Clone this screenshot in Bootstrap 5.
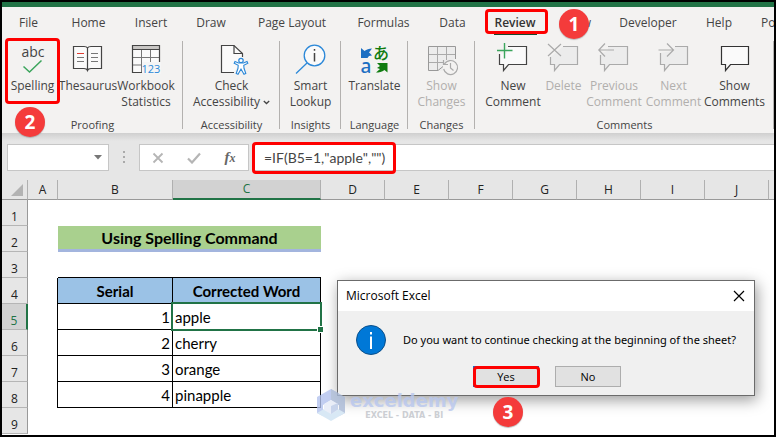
<!DOCTYPE html>
<html lang="en">
<head>
<meta charset="utf-8">
<meta name="viewport" content="width=device-width, initial-scale=1">
<title>Microsoft Excel</title>
<link href="https://cdn.jsdelivr.net/npm/bootstrap@5.3.0/dist/css/bootstrap.min.css" rel="stylesheet">
<style>
  :root { --ui: "Open Sans", "Noto Sans", sans-serif; --cell: Lato, "Open Sans", sans-serif; --excel: #217346; --mark-red: #fe0000; }
  body { font-family: var(--ui); font-size: 12px; line-height: 16px; color: #444; background: #fff; }
  .app-frame { border: 2px solid #000; overflow: hidden; }
  .title-strip { height: 5px; background: var(--excel); }
  .ribbon { background: #f3f2f1; }
  .ribbon-tabs { display: grid; grid-template-columns: 53px 67px 58px 62px 100px 83px 55px 70px 56px 84px 58px minmax(0, 1fr); height: 32px; }
  .ribbon-tabs .nav-link { color: #444; padding: 8px 0; text-align: center; white-space: nowrap; font-size: 12px; }
  .ribbon-tabs .nav-link.tab-cut { padding-left: 13px; text-align: left; }
  .ribbon-tabs .nav-link.active { font-weight: 600; color: #333; }
  .ribbon-tabs .nav-link.active::after { content: ""; position: absolute; left: 14px; right: 13px; top: 26px; height: 2px; background: #17492d; }
  .callout-box::before { content: ""; position: absolute; inset: 0; border: 3px solid var(--mark-red); border-radius: 4px; z-index: 3; pointer-events: none; }
  .tab-callout::before { inset: 2px 2px 5px 5px; }
  .step-dot { position: absolute; z-index: 5; width: 30px; height: 30px; border-radius: 50%; background: #f43b3b; color: #fff; font: 700 19px/30px "Open Sans", sans-serif; text-align: center; box-shadow: 0 1px 1px #8888; }
  .step-one { left: 9px; top: 2px; }
  .step-two { left: 13px; top: 68px; }
  .ribbon-groups { height: 94px; }
  .tool-group { position: relative; padding-top: 4px; }
  .tool-group::after { content: ""; position: absolute; right: 0; top: 2px; bottom: 4px; width: 1px; background: #b3b1af; }
  .tool-row { display: grid; justify-content: center; height: 74px; align-items: start; }
  .g-proof { width: 181px; } .g-proof .tool-row { grid-template-columns: 55px 56px 60px; justify-content: start; padding-left: 3px; }
  .g-access { width: 97px; } .g-access .tool-row { grid-template-columns: 90px; }
  .g-insight { width: 61px; } .g-insight .tool-row { grid-template-columns: 56px; }
  .g-lang, .g-change { width: 67px; } .g-lang .tool-row, .g-change .tool-row { grid-template-columns: 60px; }
  .g-comment { flex: 1 1 0; } .g-comment .tool-row { grid-template-columns: 60px 41px 60px 59px 63px; }
  .tool-btn { position: relative; border: 0; padding: 0; background: none; color: #444; font-size: 12px; line-height: 16px; display: flex; flex-direction: column; align-items: center; white-space: nowrap; }
  .tool-btn svg { width: 32px; height: 32px; margin-bottom: 3px; display: block; overflow: visible; }
  .tool-btn:disabled { color: #b1afad; }
  .spell-callout::before { inset: -5px 0 -10px 0; }
  .group-name { text-align: center; font-size: 11px; line-height: 16px; }
  .formula-zone { background: linear-gradient(#cfcfcf, #e6e6e6 8px); padding: 11px 0 9px 5px; }
  .bar-field { height: 27px; background: #fff; border: 1px solid #c6c6c6; border-radius: 0; padding: 0; }
  .name-box { width: 102px; appearance: none; background: #fff url("data:image/svg+xml,%3Csvg xmlns='http://www.w3.org/2000/svg' width='8' height='5'%3E%3Cpath d='M0 0h8L4 4.500z' fill='%23777'/%3E%3C/svg%3E") no-repeat right 6px center; }
  .bar-dots { width: 30px; }
  .fx-box { width: 110px; }
  .fx-box button { border: 0; background: none; padding: 0; width: 36px; height: 25px; display: grid; place-items: center; }
  .fx-sign { font: italic 700 15px/20px "Liberation Serif", serif; color: #666; }
  .fx-sign small { font-size: 12px; }
  .formula-wrap { position: relative; flex: 1 1 0; margin-left: 3px; }
  .formula-input { width: 100%; padding-left: 11px; font: 14px/20px var(--cell); font-kerning: none; color: #444; border-right: 0; display: block; }
  .formula-callout::before { right: auto; width: 144px; inset: -2px auto -3px 0; }
  .sheet-area { position: relative; }
  .sheet { table-layout: fixed; width: 100%; border-collapse: separate; border-spacing: 0; font: 14px/20px var(--cell); color: #000; }
  .sheet th, .sheet td { padding: 0; height: 26px; white-space: nowrap; overflow: hidden; }
  .sheet thead th { height: 20px; background: #e6e6e6; border-bottom: 1px solid #999; border-right: 1px solid #b0b0b0; text-align: center; font: 12px/18px var(--ui); color: #222; }
  .sheet thead th.corner { text-align: right; }
  .sheet thead th:last-child { border-right: 0; }
  .sheet thead th.picked { background: #d2d2d2; color: var(--excel); border-bottom: 2px solid var(--excel); }
  .sheet tbody th { background: #e6e6e6; border-bottom: 1px solid #b5b5b5; border-right: 1px solid #999; font: 12px/16px var(--ui); color: #222; text-align: center; vertical-align: bottom; }
  .sheet tbody th.picked { background: #d2d2d2; color: var(--excel); border-right: 2px solid var(--excel); }
  .sheet .sheet-title { background: #a9d08e; border-bottom: 3px solid #a3b5de; text-align: center; font-weight: 700; font-size: 16px; }
  .sheet .edge-b { border-bottom: 1px solid #000; }
  .sheet .edge-r { border-right: 1px solid #000; }
  .sheet .boxed { border-right: 1px solid #000; border-bottom: 1px solid #000; font-size: 15px; }
  .sheet .col-name { background: #9bc2e6; text-align: center; font-weight: 700; }
  .sheet .num { text-align: right; padding-right: 2px; }
  .sheet .word { padding-left: 2px; }
  .sheet td.selected { position: relative; overflow: visible; }
  .selected::before { content: ""; position: absolute; inset: -2px -2px -2px -2px; border: 2px solid var(--excel); }
  .selected::after { content: ""; position: absolute; right: -4px; bottom: -4px; width: 7px; height: 7px; background: var(--excel); border: 1px solid #fff; }
  .msg-box { position: absolute; left: 335px; top: 100px; width: 418px; border: 1px solid #6b6b6b; background: #f0f0f0; box-shadow: 2px 4px 14px #0006; color: #000; z-index: 2; }
  .msg-title { height: 30px; padding: 0 9px 0 8px; background: #fff; font-size: 12px; }
  .msg-text { padding: 14px 0 0 18px; gap: 17px; font-family: "Noto Sans", sans-serif; font-size: 11px; }
  .msg-actions { padding: 11px 0 8px 135px; gap: 16px; }
  .msg-btn { position: relative; width: 66px; height: 21px; border: 1px solid #adadad; border-radius: 0; background: #e1e1e1; font-size: 11px; line-height: 16px; padding: 0; color: #000; }
  .yes-callout { border-color: #0078d7; }
  .yes-callout::before { inset: -1px -2px -2px -1px; }
  .step-three { left: 491px; top: 217px; }
  .brand-mark { position: absolute; left: 314px; top: 208px; z-index: 4; opacity: .8; gap: 4px; }
  .brand-name { font: 700 18px/22px "DejaVu Sans", sans-serif; color: #b8c7ee; }
  .brand-line { font: 700 8px/8px "DejaVu Sans", sans-serif; color: #c0c3c9; text-align: center; }
</style>
<script src="https://cdn.jsdelivr.net/npm/bootstrap@5.3.0/dist/js/bootstrap.bundle.min.js"></script>
</head>
<body>
<div class="app-frame min-vh-100">
  <div class="title-strip"></div>
  <header class="ribbon">
    <nav class="ribbon-tabs" aria-label="Ribbon tabs">
      <a class="nav-link" href="#">File</a>
      <a class="nav-link" href="#">Home</a>
      <a class="nav-link" href="#">Insert</a>
      <a class="nav-link" href="#">Draw</a>
      <a class="nav-link" href="#">Page Layout</a>
      <a class="nav-link" href="#">Formulas</a>
      <a class="nav-link" href="#">Data</a>
      <a class="nav-link active position-relative callout-box tab-callout" href="#" aria-current="page">Review</a>
      <div class="position-relative"><a class="nav-link" href="#">View</a><span class="step-dot step-one">1</span></div>
      <a class="nav-link" href="#">Developer</a>
      <a class="nav-link" href="#">Help</a>
      <a class="nav-link tab-cut overflow-hidden" href="#">Power Pivot</a>
    </nav>
    <div class="ribbon-groups d-flex">
      <section class="tool-group g-proof">
        <div class="tool-row">
          <button class="tool-btn callout-box spell-callout" type="button">
            <svg viewBox="0 0 32 32" fill="none"><text x="16" y="14" text-anchor="middle" font-family="Open Sans" font-size="14" fill="#444">abc</text><path d="M6.500 23.500l6 5.500L24.500 17.500" stroke="#3ba55c" stroke-width="1.500"/></svg>
            <span>Spelling</span>
          </button>
          <button class="tool-btn" type="button">
            <svg viewBox="0 0 32 32" fill="none"><path d="M1.500 3.500H12c2 0 3 .5 3.500 1.500.5-1 1.500-1.500 3.500-1.500h10.500v22H19c-2 0-3 .7-3.500 2-.5-1.300-1.500-2-3.500-2H1.500zM15.500 5v22" fill="#fafafa" stroke="#444" stroke-width="1.200"/><path d="M5 14.500h7M5 18.500h7M19 10.500h7M19 14.500h7M19 18.500h7" stroke="#777"/><path d="M5 10.500h7" stroke="#e03c31"/></svg>
            <span>Thesaurus</span>
          </button>
          <button class="tool-btn" type="button">
            <svg viewBox="0 0 32 32" fill="none"><path d="M2.500 2.500h27v27h-27z" fill="#fafafa"/><path d="M2.500 2.500h27v4h-27z" fill="#c8c6c4"/><path d="M11.500 7v22M20.500 7v13M3 14.500h26M3 22h9" stroke="#777"/><path d="M12 29.500H2.500v-27h27V19M2.500 6.500h27" stroke="#444" stroke-width="1.200"/><path d="M12.500 19H31v12H12.500z" fill="#f5f5f5"/><text x="11.500" y="30" font-family="Open Sans" font-size="11" fill="#2b88d8">123</text></svg>
            <span>Workbook</span><span>Statistics</span>
          </button>
        </div>
        <div class="group-name">Proofing</div>
        <span class="step-dot step-two">2</span>
      </section>
      <section class="tool-group g-access">
        <div class="tool-row">
          <button class="tool-btn" type="button">
            <svg viewBox="0 0 32 32" fill="none"><path d="M18 29.500H5.500v-27H18l8.500 8V14" fill="#fafafa" stroke="#444" stroke-width="1.200"/><path d="M18 2.500v8h8.500" stroke="#444" stroke-width="1.200"/><circle cx="25" cy="17.500" r="2.200" fill="#fff" stroke="#2b88d8" stroke-width="1.200"/><path d="M19 18.500l3.500 1.500h5l3.500-1.500.8 1.800-4 2 .2 3 1.800 5.200-1.800.7-3-5.200-3 5.200-1.800-.7 1.800-5.200.2-3-4-2z" fill="#fff" stroke="#2b88d8" stroke-width="1.100"/></svg>
            <span>Check</span><span>Accessibility <svg class="d-inline m-0" style="width:7px;height:5px" viewBox="0 0 7 5" fill="none"><path d="M.8 1l2.700 2.500L6.200 1" stroke="#444" stroke-width="1.300"/></svg></span>
          </button>
        </div>
        <div class="group-name">Accessibility</div>
      </section>
      <section class="tool-group g-insight">
        <div class="tool-row">
          <button class="tool-btn" type="button">
            <svg viewBox="0 0 32 32" fill="none"><path d="M12 20L1 30.500" stroke="#2b88d8" stroke-width="1.300"/><circle cx="19.500" cy="12.500" r="10.300" fill="#fafafa" stroke="#2b88d8" stroke-width="1.300"/><path d="M19.500 6v1.700M19.500 10v8.500" stroke="#444" stroke-width="1.500"/></svg>
            <span>Smart</span><span>Lookup</span>
          </button>
        </div>
        <div class="group-name">Insights</div>
      </section>
      <section class="tool-group g-lang">
        <div class="tool-row">
          <button class="tool-btn" type="button">
            <svg viewBox="0 0 32 32"><path d="M2 5l3.500 3c2-1.500 4.500-2.500 7.500-2.500L10 9.500c1 .5 2 1.500 3 3l-3 .5-1.500 2H2z" fill="#1b6ec2"/><text x="1.500" y="30" font-family="Noto Sans" font-weight="500" font-size="19" fill="#1b6ec2">a</text><text x="14" y="15.500" font-family="Noto Sans CJK JP" font-weight="500" font-size="16" fill="#107c10">あ</text><path d="M18 20h10.500v9.500l-3-2.500c-2.500 2-5.500 2.500-8.500 2.500l4-3.500-3-1 3-2z" fill="#107c10"/></svg>
            <span>Translate</span>
          </button>
        </div>
        <div class="group-name">Language</div>
      </section>
      <section class="tool-group g-change">
        <div class="tool-row">
          <button class="tool-btn" type="button" disabled>
            <svg viewBox="0 0 32 32" fill="none"><path d="M2.500 3.500h27v11L18 27.500H2.500z" fill="#ececec"/><path d="M29.500 16V3.500h-27v24H12l5-4" stroke="#999"/><path d="M11.500 4v23M20.500 4v13M3 11.500h26M3 19.500h14" stroke="#aaa"/><circle cx="24.500" cy="24.500" r="7.500" fill="#f3f2f1"/><path d="M18.500 21a7 7 0 1 1-.8 5M17.500 17v4.500H22M24.500 20v5l3 2.500" stroke="#aaa" stroke-width="1.200"/></svg>
            <span>Show</span><span>Changes</span>
          </button>
        </div>
        <div class="group-name">Changes</div>
      </section>
      <section class="tool-group g-comment">
        <div class="tool-row">
          <button class="tool-btn" type="button">
            <svg viewBox="0 0 32 32" fill="none"><path d="M2.500 10.500H10v-7h19.500v18h-18l-5 6v-6h-4z" fill="#fafafa"/><path d="M2.500 11v10.500h4v6l5-6h18v-18H11" stroke="#444" stroke-width="1.200"/><path d="M7.500 0v15.500M0 7.500h15.500" stroke="#3ba55c" stroke-width="1.400"/></svg>
            <span>New</span><span>Comment</span>
          </button>
          <button class="tool-btn" type="button" disabled>
            <svg viewBox="0 0 32 32" fill="none"><path d="M2.500 14v7.500h4v6l5-6h18v-18H15L7.500 10z" fill="#ececec"/><path d="M2.500 14v7.500h4v6l5-6h18v-18H15" stroke="#aaa" stroke-width="1.200"/><path d="M0 1l13 12M13 1L0 13" stroke="#aaa" stroke-width="1.200"/></svg>
            <span>Delete</span>
          </button>
          <button class="tool-btn" type="button" disabled>
            <svg viewBox="0 0 32 32" fill="none"><path d="M2.500 11v10.500h4v6l5-6h18v-18H10v4z" fill="#ececec"/><path d="M2.500 12v9.500h4v6l5-6h18v-18H10" stroke="#aaa" stroke-width="1.200"/><path d="M16 7H1M7 .5L.8 7 7 13.500" stroke="#aaa" stroke-width="1.200"/></svg>
            <span>Previous</span><span>Comment</span>
          </button>
          <button class="tool-btn" type="button" disabled>
            <svg viewBox="0 0 32 32" fill="none"><path d="M2.500 10v11.500h4v6l5-6h18v-18H17l-1 4z" fill="#ececec"/><path d="M2.500 10v11.500h4v6l5-6h18v-18H17" stroke="#aaa" stroke-width="1.200"/><path d="M.5 7h15M9 .5L15.500 7 9 13.500" stroke="#aaa" stroke-width="1.200"/></svg>
            <span>Next</span><span>Comment</span>
          </button>
          <button class="tool-btn" type="button">
            <svg viewBox="0 0 32 32" fill="none"><path d="M2.500 3.500h27v18h-18l-5 6v-6h-4z" fill="#fafafa" stroke="#333" stroke-width="1.200"/></svg>
            <span>Show</span><span>Comments</span>
          </button>
        </div>
        <div class="group-name">Comments</div>
      </section>
    </div>
  </header>

  <div class="formula-zone d-flex">
    <select class="bar-field name-box" aria-label="Name box"><option></option></select>
    <div class="bar-dots d-grid"><svg class="m-auto" width="3" height="13" fill="#aaa"><path d="M0 0h2v2H0zM0 5h2v2H0zM0 10h2v2H0z"/></svg></div>
    <div class="bar-field fx-box d-flex">
      <button type="button" aria-label="Cancel"><svg width="12" height="12" fill="none"><path d="M1.500 1.500l9 9M10.500 1.500l-9 9" stroke="#b5b5b5" stroke-width="1.800"/></svg></button>
      <button type="button" aria-label="Enter"><svg width="14" height="12" fill="none"><path d="M1 6.500l4 4L13 1.500" stroke="#b5b5b5" stroke-width="2.200"/></svg></button>
      <button type="button" aria-label="Insert function"><span class="fx-sign">f<small>x</small></span></button>
    </div>
    <div class="formula-wrap callout-box formula-callout">
      <input class="bar-field formula-input" type="text" aria-label="Formula" value="=IF(B5=1,&quot;apple&quot;,&quot;&quot;)">
    </div>
  </div>

  <main class="sheet-area">
    <table class="sheet">
      <colgroup><col style="width:26px"><col style="width:30px"><col style="width:115px"><col style="width:148px"><col style="width:64px"><col style="width:64px"><col style="width:64px"><col style="width:64px"><col style="width:64px"><col style="width:64px"><col style="width:64px"><col></colgroup>
      <thead><tr><th class="corner" aria-label="Select all"><svg class="d-block ms-auto me-1" width="12" height="12"><path d="M12 0v12H0z" fill="#b3b3b3"/></svg></th><th>A</th><th>B</th><th class="picked">C</th><th>D</th><th>E</th><th>F</th><th>G</th><th>H</th><th>I</th><th>J</th><th></th></tr></thead>
      <tbody>
        <tr><th>1</th><td></td><td></td><td></td><td colspan="8"></td></tr>
        <tr><th>2</th><td></td><td class="sheet-title" colspan="2">Using Spelling Command</td><td colspan="8"></td></tr>
        <tr><th>3</th><td></td><td class="edge-b"></td><td class="edge-b"></td><td colspan="8"></td></tr>
        <tr><th>4</th><td class="edge-r"></td><td class="boxed col-name">Serial</td><td class="boxed col-name">Corrected Word</td><td colspan="8"></td></tr>
        <tr><th class="picked">5</th><td class="edge-r"></td><td class="boxed num">1</td><td class="boxed word selected">apple</td><td colspan="8"></td></tr>
        <tr><th>6</th><td class="edge-r"></td><td class="boxed num">2</td><td class="boxed word">cherry</td><td colspan="8"></td></tr>
        <tr><th>7</th><td class="edge-r"></td><td class="boxed num">3</td><td class="boxed word">orange</td><td colspan="8"></td></tr>
        <tr><th>8</th><td class="edge-r"></td><td class="boxed num">4</td><td class="boxed word">pinapple</td><td colspan="8"></td></tr>
        <tr><th>9</th><td></td><td></td><td></td><td colspan="8"></td></tr>
      </tbody>
    </table>

    <div class="msg-box" role="dialog" aria-labelledby="msg-heading">
      <div class="msg-title d-flex align-items-center justify-content-between">
        <span id="msg-heading">Microsoft Excel</span>
        <button class="border-0 bg-transparent p-0 d-flex" type="button" aria-label="Close"><svg width="12" height="12" fill="none"><path d="M1 1l10 10M11 1L1 11" stroke="#000" stroke-width="1.200"/></svg></button>
      </div>
      <div class="msg-text d-flex align-items-center">
        <svg width="30" height="30"><circle cx="15" cy="15" r="14.500" fill="#0078d7" stroke="#0b4f8a"/><path d="M14 7h2v2.500h-2zM14 11.500h2V24h-2z" fill="#fff"/></svg>
        <span>Do you want to continue checking at the beginning of the sheet?</span>
      </div>
      <div class="msg-actions d-flex">
        <button class="msg-btn callout-box yes-callout" type="button">Yes</button>
        <button class="msg-btn" type="button">No</button>
      </div>
    </div>
    <span class="step-dot step-three">3</span>
    <div class="brand-mark d-flex align-items-center">
      <svg width="30" height="34"><path d="M15 1L1 9v16l6 3V17l8-5 8 5V5.500z" fill="#b3c2ee"/><path d="M15 1l14 8v16l-6 3V17l-8-5z" fill="#a9b9d6"/><path d="M1 25l7-4 7 4 7-4 7 4-14 8z" fill="#cfe3f3"/><path d="M15 12l7 4v6l-7 4-7-4v-6z" fill="#e6ebf7"/><path d="M15 18l7-3v6.500L15 26z" fill="#bccbe8"/></svg>
      <div><div class="brand-name">exceldemy</div><div class="brand-line">EXCEL - DATA - BI</div></div>
    </div>
  </main>
</div>
</body>
</html>
